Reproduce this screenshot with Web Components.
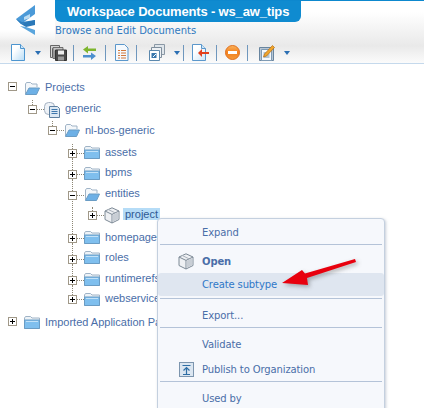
<!DOCTYPE html>
<html lang="en">
<head>
<meta charset="UTF-8">
<title>Workspace Documents</title>
<style>
  html, body { margin: 0; height: 100%; overflow: hidden; background: #fff; }
</style>
</head>
<body>
<app-shell>
  <doc-header slot="header" heading="Workspace Documents - ws_aw_tips" sub="Browse and Edit Documents"></doc-header>
  <doc-toolbar slot="header">
    <ui-icon name="newdoc" style="margin-left:10px"></ui-icon><tool-caret style="margin-left:9px"></tool-caret>
    <ui-icon name="save" style="margin-left:9px"></ui-icon><tool-sep style="margin-left:6px"></tool-sep>
    <ui-icon name="swap" style="margin-left:9px"></ui-icon><tool-sep style="margin-left:9px"></tool-sep>
    <ui-icon name="list" style="margin-left:8px"></ui-icon><tool-sep style="margin-left:7px"></tool-sep>
    <ui-icon name="stack" style="margin-left:12px"></ui-icon><tool-caret style="margin-left:9px"></tool-caret><tool-sep style="margin-left:3px"></tool-sep>
    <ui-icon name="import" style="margin-left:8px"></ui-icon><tool-sep style="margin-left:6px"></tool-sep>
    <ui-icon name="stop" style="margin-left:8px"></ui-icon><tool-sep style="margin-left:7px"></tool-sep>
    <ui-icon name="edit" style="margin-left:11px"></ui-icon><tool-caret style="margin-left:8px"></tool-caret>
  </doc-toolbar>
  <doc-tree>
    <tree-row level="0" toggle="minus" icon="open" lift="-2" tlift="1">Projects</tree-row>
    <tree-row level="1" toggle="minus" icon="multi" stub="5" tlift="1" style="margin-top:3px">generic</tree-row>
    <tree-row level="2" toggle="minus" icon="open" stub="5" style="margin-top:1px">nl-bos-generic</tree-row>
    <tree-row level="3" toggle="plus" icon="closed" stub="5" lift="1" style="margin-top:3px">assets</tree-row>
    <tree-row level="3" toggle="plus" icon="closed" stub="12" lift="1" tlift="1" style="margin-top:1px">bpms</tree-row>
    <tree-row level="3" toggle="minus" icon="open" stub="12" lift="1" tlift="1" style="margin-top:1px">entities</tree-row>
    <tree-row level="4" toggle="plus" icon="box" stub="4" tlift="1" selected>project</tree-row>
    <tree-row level="3" toggle="plus" icon="closed" stub="35" lift="1" style="margin-top:3px">homepage</tree-row>
    <tree-row level="3" toggle="plus" icon="closed" stub="12" lift="2" style="margin-top:1px">roles</tree-row>
    <tree-row level="3" toggle="plus" icon="closed" stub="12" lift="1" tlift="1" style="margin-top:1px">runtimerefs</tree-row>
    <tree-row level="3" toggle="plus" icon="closed" stub="10" tlift="1" style="margin-top:-1px">webservices</tree-row>
    <tree-row level="0" toggle="plus" icon="closed" lift="-1" style="margin-top:2px">Imported Application Packages</tree-row>
  </doc-tree>
  <context-menu slot="overlay">
    <menu-item style="margin-top:1px;padding-top:2px">Expand</menu-item>
    <menu-sep></menu-sep>
    <menu-item bold style="margin-top:4px;padding-top:2px"><ui-icon slot="icon" name="box"></ui-icon>Open</menu-item>
    <menu-item hover style="margin-top:1px">Create subtype</menu-item>
    <menu-sep style="margin-top:2px"></menu-sep>
    <menu-item style="margin-top:5px">Export...</menu-item>
    <menu-sep style="margin-top:0"></menu-sep>
    <menu-item style="margin-top:5px">Validate</menu-item>
    <menu-item style="margin-top:1px;padding-top:2px"><ui-icon slot="icon" name="publish"></ui-icon>Publish to Organization</menu-item>
    <menu-sep></menu-sep>
    <menu-item style="margin-top:5px">Used by</menu-item>
  </context-menu>
  <red-arrow slot="overlay"></red-arrow>
</app-shell>

<script>
const ICONS = {
  open: `<path d="M1.500 14V4l1-1.500h4L8 4h5v3" fill="#f4f7fa" stroke="#9fb3c6"/><path d="M1.500 14.500 5 8h10.500l-3 6.500z" fill="#6db0e6" stroke="#6a9cc4"/>`,
  closed: `<path d="M.5 14.500V4l1-1.500h5L8 4h7.500v10.500z" fill="#eef3f7" stroke="#9fb3c6"/><path d="M.5 14.500V6h15v8.500z" fill="#7fbfee" stroke="#6a9cc4"/><path d="M2 7h12v1H2z" fill="#c3e2f8"/>`,
  multi: `<rect x=".5" y="1.500" width="10" height="12" rx="4" fill="#eef2f7" stroke="#a4b2c2"/><path d="M5.500 5.500h8l2 2v9h-10z" fill="#dce8f3" stroke="#5d7f9f"/><path d="M7.500 8.500h6M7.500 10.500h6M7.500 12.500h6" stroke="#3f78ad"/>`,
  box: `<path d="M8 .8 15 4v8.500L8 16 1 12.500V4z" fill="#eef0f3" stroke="#7d8a96"/><path d="M1 4l7 3.400L15 4M8 7.400V16" fill="none" stroke="#7d8a96"/><path d="M8.600 8 14.400 5v7L8.600 15z" fill="#c8ced5"/><path d="M4 2.400l7 3.400" stroke="#aab2bb" fill="none"/>`,
  publish: `<rect x=".5" y=".5" width="14" height="14" fill="#dbe6f1" stroke="#7c95ae"/><path d="M3.500 3.500h8M7.500 6v6M4.500 8.500 7.500 5.500l3 3" fill="none" stroke="#2f6ea5" stroke-width="1.200"/><path d="M4 12.500h7" stroke="#2f6ea5"/>`,
  newdoc: `<defs><linearGradient id="g" x1="0" y1="0" x2="1" y2="1"><stop offset=".3" stop-color="#fff"/><stop offset="1" stop-color="#b7dcf6"/></linearGradient></defs><path d="M1.500.5h9l4 4v12h-13z" fill="url(#g)" stroke="#4d95cf"/><path d="M10.500.5v4h4" fill="#cfe6f7" stroke="#4d95cf"/>`,
  save: `<path d="M.5 1.500h9v3h-7v9h-2z" fill="#d4d4d4" stroke="#666"/><path d="M3 3.500h10v3H5v8H3z" fill="#c4c4c4" stroke="#555" stroke-width=".8"/><path d="M5.500 6h11v10.500h-11z" fill="#4a4a4a" stroke="#333"/><path d="M8 6.500h6v4H8z" fill="#ededed"/><path d="M8 12.500h6v4H8z" fill="#9b9b9b"/>`,
  swap: `<path d="M0 5.500 5 2v2.500h8v2.500H5v2.500z" fill="#7eb52e"/><path d="M13 12 8 8.500V11H0v2.500h8V16z" fill="#4d8fce"/>`,
  list: `<path d="M1.500.5h9l3.500 3.500v12.500H1.500z" fill="#f5f9fd" stroke="#5b97cb"/><path d="M4 6.500h2M7 6.500h5M4 9h2M7 9h5M4 11.500h2M7 11.500h5M4 14h2M7 14h5" stroke="#d1783d"/>`,
  stack: `<path d="M5.500.5h10v10h-10z" fill="#dfe5ea" stroke="#8a98a5"/><path d="M2.500 3.500h10v10h-10z" fill="#eef1f4" stroke="#7f8e9c"/><path d="M.5 6.500h10v10H.5z" fill="#fff" stroke="#5b88ad"/><path d="M2.500 9h5v5h-5z" fill="#3a78ad"/><path d="M4 13l3-3" stroke="#fff"/>`,
  import: `<defs><linearGradient id="g" x1="0" y1="0" x2="1" y2="1"><stop offset=".3" stop-color="#fff"/><stop offset="1" stop-color="#cde5f7"/></linearGradient></defs><path d="M.5.5h9l4 4v12H.5z" fill="url(#g)" stroke="#5b97cb"/><path d="M9.500.5v4h4" fill="#cfe6f7" stroke="#5b97cb"/><path d="M6 9l4-4v3h7v2h-7v3z" fill="#e2401d"/>`,
  stop: `<defs><linearGradient id="o" x1="0" y1="0" x2="0" y2="1"><stop offset="0" stop-color="#fbb45c"/><stop offset=".5" stop-color="#f2801e"/><stop offset="1" stop-color="#f59a3a"/></linearGradient></defs><circle cx="7.500" cy="8.500" r="7" fill="url(#o)" stroke="#e0701e"/><rect x="3" y="7" width="9" height="3" fill="#fff"/>`,
  edit: `<path d="M.5 3.500h14v13H.5z" fill="#b9c6d3" stroke="#68859f"/><path d="M2.500 5.500h10v11h-10z" fill="#f6f9fc" stroke="#7f9bb4"/><path d="M4.500 9h6M4.500 11h6M4.500 13h6" stroke="#6f8ea9"/><path d="M5.500 10 13.500 1.500l2 2-8 8.500-3 1z" fill="#f0a52c" stroke="#b66d10" stroke-width=".7"/>`
};

const sizes = { newdoc: 16, save: 17, swap: 13, list: 15, stack: 16, import: 18, stop: 15, edit: 17 };

class UiIcon extends HTMLElement {
  constructor() {
    super();
    const name = this.getAttribute('name');
    const w = sizes[name] || (name === 'publish' ? 15 : 16);
    const h = name === 'publish' ? 15 : 17;
    this.attachShadow({mode: 'open'}).innerHTML = `
      <style>:host { display: block; flex: none; width: ${w}px; height: ${h}px; } svg { display: block; }</style>
      <svg width="${w}" height="${h}" viewBox="0 0 ${w} ${h}">${ICONS[name]}</svg>`;
  }
}
customElements.define('ui-icon', UiIcon);

class AppShell extends HTMLElement {
  constructor() {
    super();
    this.attachShadow({mode: 'open'}).innerHTML = `
      <style>
        :host { display: block; position: relative; width: 424px; height: 408px; overflow: hidden;
          font-family: "Liberation Sans", Arial, sans-serif; }
        header { background: linear-gradient(#fff 0, #fff 12px, #e9e9e9 46px, #f2f2f2 54px, #fbfbfb 63px);
          border-bottom: 1px solid #c5d9ec; }
      </style>
      <header><slot name="header"></slot></header>
      <slot></slot>
      <slot name="overlay"></slot>`;
  }
}
customElements.define('app-shell', AppShell);

class DocHeader extends HTMLElement {
  constructor() {
    super();
    const heading = this.getAttribute('heading'), sub = this.getAttribute('sub');
    this.attachShadow({mode: 'open'}).innerHTML = `
      <style>
        :host { display: grid; grid-template-columns: 55px 1fr; height: 42px; }
        .logo { background: linear-gradient(#fff 70%, rgba(255,255,255,0)); padding: 5px 0 0 15px; box-sizing: border-box; height: 42px; }
        .logo svg { display: block; }
        .right { border-top: 1px solid #0d88ce; }
        .bar { width: 246px; height: 21px; box-sizing: border-box; background: #0f8bd0; color: #fff;
          font: bold 13px/21px "Liberation Sans", Arial, sans-serif; padding-left: 12px;
          border-radius: 0 0 6px 6px; white-space: nowrap; letter-spacing: -.16px; }
        .sub { font: 10px/12px "DejaVu Sans", Verdana, sans-serif; color: #2f79c0; margin-top: 3px; white-space: nowrap; }
      </style>
      <div class="logo">
        <svg width="22" height="31" viewBox="0 0 22 31">
          <path d="M20 0 1 14l5 5 14-10z" fill="#4b9ad8"/>
          <path d="M1 14l5 5 14-1v-3L7 17z" fill="#2f7fc0"/>
          <path d="M9 12l6-3v4l-6 2z" fill="#bcdcf2"/>
          <path d="M6 19l14-4v5l-9 2z" fill="#2a78b8"/>
          <path d="M5 21l6 1 9 3v5z" fill="#5aa5dd"/>
        </svg>
      </div>
      <div class="right">
        <div class="bar">${heading}</div>
        <div class="sub">${sub}</div>
      </div>`;
  }
}
customElements.define('doc-header', DocHeader);

class DocToolbar extends HTMLElement {
  constructor() {
    super();
    this.attachShadow({mode: 'open'}).innerHTML = `
      <style>:host { display: flex; align-items: center; height: 21px; }</style><slot></slot>`;
  }
}
customElements.define('doc-toolbar', DocToolbar);

class ToolCaret extends HTMLElement {
  constructor() {
    super();
    this.attachShadow({mode: 'open'}).innerHTML = `
      <style>
        :host { display: block; flex: none; width: 0; height: 0; border: 3.5px solid transparent; border-top: 4px solid #2b6fb3; border-bottom: 0; }
      </style>`;
  }
}
customElements.define('tool-caret', ToolCaret);

class ToolSep extends HTMLElement {
  constructor() {
    super();
    this.attachShadow({mode: 'open'}).innerHTML = `
      <style>:host { display: block; flex: none; width: 1px; height: 16px; background: #6f97bd; }</style>`;
  }
}
customElements.define('tool-sep', ToolSep);

class DocTree extends HTMLElement {
  constructor() {
    super();
    this.attachShadow({mode: 'open'}).innerHTML = `
      <style>:host { display: block; padding-top: 12px; }</style><slot></slot>`;
  }
}
customElements.define('doc-tree', DocTree);

class TreeRow extends HTMLElement {
  constructor() {
    super();
    const level = +this.getAttribute('level');
    const icon = this.getAttribute('icon');
    const stub = this.getAttribute('stub');
    const lift = +this.getAttribute('lift') || 0;
    const tlift = +this.getAttribute('tlift') || 0;
    this.attachShadow({mode: 'open'}).innerHTML = `
      <style>
        :host { display: flex; align-items: center; height: 20px; padding-left: ${8 + level * 20}px; white-space: nowrap;
          font: 11px/12px "Liberation Sans", Arial, sans-serif; color: #4a6ea8; }
        .toggle { position: relative; flex: none; width: 7px; height: 7px; border: 1px solid #a09888; background: #fff; }
        .toggle::before { content: ""; position: absolute; left: 1px; right: 1px; top: 3px; height: 1px; background: #000; }
        :host([toggle=plus]) .toggle::after { content: ""; position: absolute; top: 1px; bottom: 1px; left: 3px; width: 1px; background: #000; }
        .stub { position: absolute; left: 3px; bottom: 8px; height: ${stub || 0}px; border-left: 1px dotted #8c8674; }
        .dash { flex: none; width: 7px; ${level ? 'border-top: 1px dotted #8c8674;' : ''} }
        .item { display: flex; align-items: center; margin-bottom: ${lift * 2}px; }
        .label { margin-left: 3px; padding: 0 2px; line-height: 12px; margin-bottom: ${tlift * 2}px; }
        :host([selected]) .label { background: #b5dcf7; color: #2f5a94; }
      </style>
      <span class="toggle">${stub ? '<span class="stub"></span>' : ''}</span>
      <span class="dash"></span>
      <span class="item">
        <ui-icon name="${icon}"></ui-icon>
        <span class="label"><slot></slot></span>
      </span>`;
  }
}
customElements.define('tree-row', TreeRow);

class ContextMenu extends HTMLElement {
  constructor() {
    super();
    this.attachShadow({mode: 'open'}).innerHTML = `
      <style>
        :host { display: block; position: absolute; left: 157px; top: 218px; width: 226px; height: 200px;
          background: #f6f8fc; border: 1px solid #c4d0df; border-radius: 4px; box-shadow: 1px 1px 3px rgba(90,110,140,.35); }
      </style><slot></slot>`;
  }
}
customElements.define('context-menu', ContextMenu);

class MenuItem extends HTMLElement {
  constructor() {
    super();
    this.attachShadow({mode: 'open'}).innerHTML = `
      <style>
        :host { display: flex; align-items: center; box-sizing: border-box; height: 23px; white-space: nowrap; border-radius: 3px;
          font: 10px/14px "DejaVu Sans", Verdana, sans-serif; letter-spacing: -.12px; color: #4a6ea8; }
        .ico { flex: none; width: 44px; display: flex; justify-content: center; padding-left: 12px; box-sizing: border-box; }
        :host([bold]) { font-weight: bold; }
        :host([hover]) { background: #dfe6f0; color: #2f78c8; }
      </style>
      <span class="ico"><slot name="icon"></slot></span>
      <span><slot></slot></span>`;
  }
}
customElements.define('menu-item', MenuItem);

class MenuSep extends HTMLElement {
  constructor() {
    super();
    this.attachShadow({mode: 'open'}).innerHTML = `
      <style>:host { display: block; height: 1px; margin: 1px 2px 0; background: #b4c3d8; }</style>`;
  }
}
customElements.define('menu-sep', MenuSep);

class RedArrow extends HTMLElement {
  constructor() {
    super();
    this.attachShadow({mode: 'open'}).innerHTML = `
      <style>
        :host { display: block; position: absolute; left: 280px; top: 254px; width: 84px; height: 42px; }
        svg { display: block; filter: drop-shadow(2px 2px 2px rgba(60,60,60,.4)); overflow: visible; }
      </style>
      <svg width="84" height="42" viewBox="0 0 84 42">
        <path d="M2 29 22 16l3 3.500L75 5l1 3-49 16 1 7z" fill="#e8000e"/>
      </svg>`;
  }
}
customElements.define('red-arrow', RedArrow);
</script>
</body>
</html>
